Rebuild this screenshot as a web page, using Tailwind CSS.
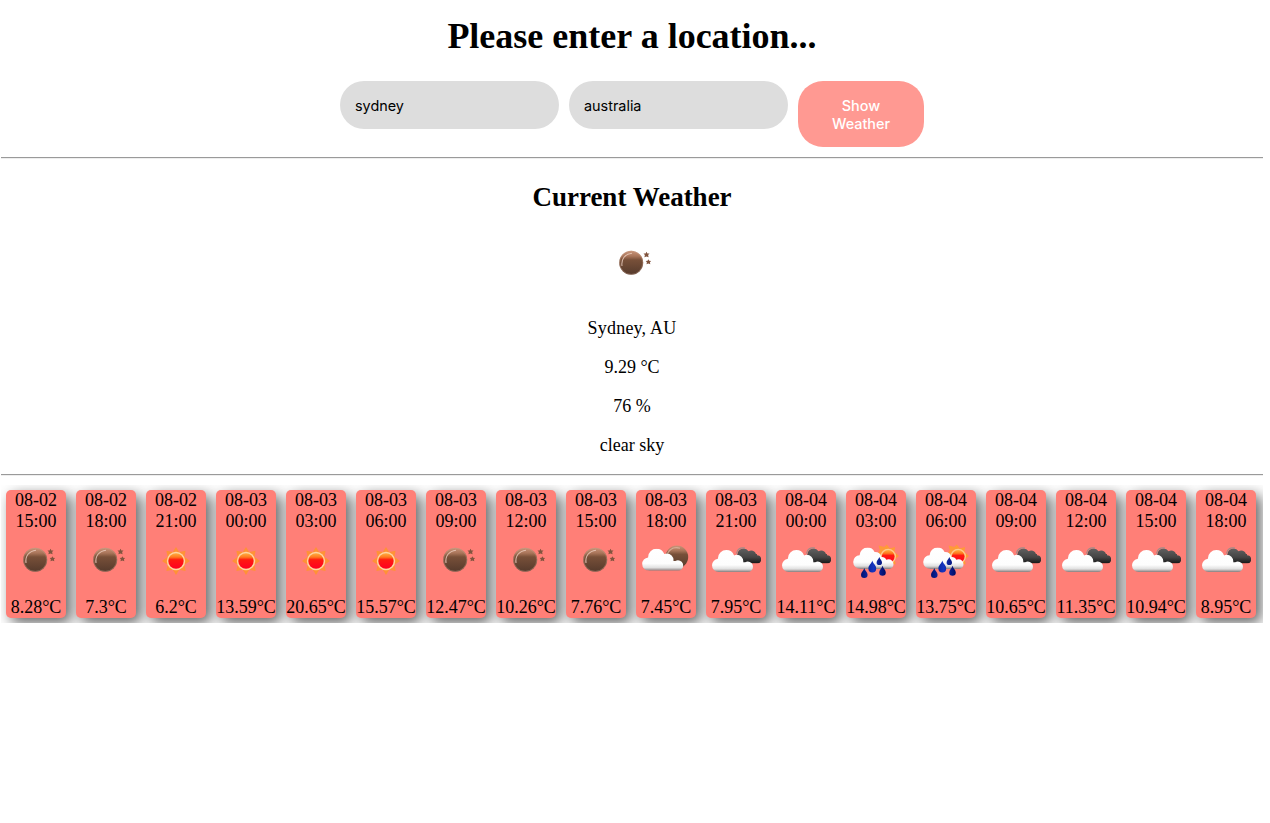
<!DOCTYPE html>
<html lang="en">
<head>
<meta charset="utf-8">
<title>Weather</title>
<script src="https://cdn.jsdelivr.net/npm/@tailwindcss/browser@4"></script>
</head>
<body class="bg-white text-black text-lg leading-[21px] font-['Liberation_Serif',serif]">
<svg class="absolute w-0 h-0" aria-hidden="true">
  <defs>
    <linearGradient id="brown" x1="0" y1="0" x2="0" y2="1"><stop offset="0" stop-color="#c99478"/><stop offset=".22" stop-color="#a9755a"/><stop offset=".38" stop-color="#785039"/><stop offset="1" stop-color="#553a2c"/></linearGradient>
    <linearGradient id="hot" x1="0" y1="0" x2="0" y2="1"><stop offset="0" stop-color="#ffad40"/><stop offset=".25" stop-color="#ff7a20"/><stop offset=".42" stop-color="#ff1a10"/><stop offset="1" stop-color="#ff0022"/></linearGradient>
    <linearGradient id="white" x1="0" y1="0" x2="0" y2="1"><stop offset="0" stop-color="#fff"/><stop offset=".68" stop-color="#fdfdfd"/><stop offset=".86" stop-color="#e0e0e0"/><stop offset=".94" stop-color="#b0a8a8"/><stop offset="1" stop-color="#857b7b"/></linearGradient>
    <linearGradient id="dark" x1="0" y1="0" x2="0" y2="1"><stop offset="0" stop-color="#626262"/><stop offset=".6" stop-color="#444"/><stop offset="1" stop-color="#171717"/></linearGradient>
    <linearGradient id="drop" x1="0" y1="0" x2="1" y2="0"><stop offset="0" stop-color="#001070"/><stop offset=".5" stop-color="#1535c0"/><stop offset="1" stop-color="#000a62"/></linearGradient>
    <clipPath id="puffs"><circle cx="15.5" cy="21.2" r="8.4"/><circle cx="7.8" cy="28" r="6.6"/><circle cx="26" cy="24" r="6.5"/><circle cx="37" cy="29.5" r="5.2"/><rect x="7.800" y="25" width="29.200" height="9.700"/></clipPath>
    <clipPath id="darkPuffs"><circle cx="32.500" cy="18.500" r="6"/><circle cx="40.200" cy="19.500" r="5"/><circle cx="46" cy="23.300" r="4.100"/><path d="M26 18h20v9.400H30z"/></clipPath>
    <clipPath id="rainPuffs"><circle cx="16.500" cy="19.500" r="7.900"/><circle cx="9" cy="26" r="6.800"/><circle cx="24" cy="22.500" r="6.500"/><circle cx="31" cy="25.500" r="4.500"/><circle cx="37.500" cy="28.300" r="5"/><rect x="9" y="24" width="28.500" height="9"/></clipPath>
    <symbol id="cloud" viewBox="0 0 50 50"><rect x="1" y="12.700" width="42" height="22" fill="url(#white)" clip-path="url(#puffs)"/></symbol>
    <symbol id="night" viewBox="0 0 50 50">
      <circle cx="24.2" cy="23.8" r="12" fill="url(#brown)"/>
      <circle cx="24.2" cy="23.8" r="11.6" fill="none" stroke="#c8a08c" stroke-opacity=".5" stroke-width=".8"/>
      <path d="M15 27C14 20 18 15 25 14.200" fill="none" stroke="#ecd0c2" stroke-opacity=".8" stroke-width="1.100"/>
      <path d="M39.500 12.800l.9 1.600 2.100.2-1.400 1.500.5 2.200-2.100-.9-2.100.9.500-2.200-1.400-1.500 2.100-.2zM41.400 20.300l.8 1.400 1.900.2-1.200 1.400.4 2-1.900-.8-1.900.8.4-2-1.200-1.400 1.900-.2z" fill="#80543e"/>
    </symbol>
    <symbol id="clear" viewBox="0 0 50 50">
      <path d="M25 11l3.200 5 6.400-1.200-1.200 6L39 25l-5.600 3.800 1.200 6.100-6.400-1.200L25 39l-3.200-5.300-6.400 1.200 1.200-6.100L11 25l5.600-4.200-1.200-6 6.400 1.200z" fill="#ff9236"/>
      <circle cx="25" cy="25" r="9.200" fill="#ffd5a2"/><circle cx="25" cy="25" r="7.700" fill="url(#hot)"/>
    </symbol>
    <symbol id="scattered" viewBox="0 0 50 50">
      <circle cx="35.800" cy="21" r="11.400" fill="url(#brown)"/><path d="M26.500 17.500c2.500-5 7.500-6.800 12.500-5.300" fill="none" stroke="#e0bda9" stroke-opacity=".7" stroke-width="1.200"/>
      <use href="#cloud" width="50" height="50"/>
    </symbol>
    <symbol id="broken" viewBox="0 0 50 50">
      <rect x="25" y="12" width="26" height="15.400" fill="url(#dark)" clip-path="url(#darkPuffs)"/>
      <path d="M25.500 17.500c.6-4.500 4-6.500 8.500-5.400" fill="none" stroke="#a08c88" stroke-width="1.300"/>
      <use href="#cloud" x="-.2" y="1.300" width="50" height="50"/>
    </symbol>
    <symbol id="rain" viewBox="0 0 50 50">
      <path d="M35.800 8.500l3 3.900 5.200-1.500-.5 5.200 4.500 3.900-4.300 3.200 1 5.200-5.500-1-12-10.500 1.600-3-1.200-4.500 5.600 1.600z" fill="#ff9a38"/>
      <circle cx="37.200" cy="20.500" r="7.800" fill="#ffc98c"/><circle cx="37.200" cy="20.500" r="6.400" fill="url(#hot)"/>
      <rect x="2" y="11.500" width="41" height="21.500" fill="url(#white)" clip-path="url(#rainPuffs)"/>
      <path d="M28.300 21c.6 2.200 2.700 3.200 2.700 5.400a2.700 2.700 0 0 1-5.400 0c0-2.200 2.100-3.200 2.700-5.400zM21.300 24.500c.9 3.400 3.900 4.700 3.900 8a3.900 3.900 0 0 1-7.800 0c0-3.300 3-4.600 3.900-8zM31.500 29.800c.8 2.900 3.300 4 3.300 6.700a3.300 3.300 0 0 1-6.600 0c0-2.700 2.500-3.800 3.300-6.700zM13.300 32c.8 2.900 3.300 4 3.300 6.700a3.300 3.300 0 0 1-6.600 0c0-2.700 2.500-3.800 3.300-6.700z" fill="url(#drop)"/>
    </symbol>
  </defs>
</svg>
<main class="ml-px w-[1262px] text-center">
  <h1 class="pt-4 text-[36px] leading-[41px] font-bold">Please enter a location...</h1>
  <form class="mt-6 flex items-start justify-center gap-2.5 font-['Inter',sans-serif] text-[14.4px] leading-[18px]">
    <input aria-label="City" value="sydney" class="h-12 w-[219px] rounded-[25px] bg-[#ddd] px-[15px] outline-none">
    <input aria-label="Country" value="australia" class="h-12 w-[219px] rounded-[25px] bg-[#ddd] px-[15px] outline-none">
    <button type="button" class="h-[66px] w-[126px] rounded-[25px] bg-[#ff9992] px-5 pt-px font-medium text-white">Show<br>Weather</button>
  </form>
  <hr class="mt-2.5 h-0.5 border-t border-b border-t-[#9a9a9a] border-b-[#eee]">
  <h2 class="mt-[22px] text-[27px] leading-[32px] font-bold">Current Weather</h2>
  <svg class="mx-auto mt-[26px] size-[50px]"><use href="#night"/></svg>
  <div class="mt-[29px] flex flex-col gap-[18px]">
    <p class="tracking-[0.2px]">Sydney, AU</p><p>9.29 °C</p><p>76 %</p><p>clear sky</p>
  </div>
  <hr class="mt-[18px] h-0.5 border-t border-b border-t-[#9a9a9a] border-b-[#eee]">
  <section id="forecast" class="mt-[9px] flex h-[138px] gap-2.5 overflow-hidden p-[5px]"></section>
</main>
<script>
const forecast = [
  ['08-02','15:00','night','8.28'],['08-02','18:00','night','7.3'],['08-02','21:00','clear','6.2'],
  ['08-03','00:00','clear','13.59'],['08-03','03:00','clear','20.65'],['08-03','06:00','clear','15.57'],
  ['08-03','09:00','night','12.47'],['08-03','12:00','night','10.26'],['08-03','15:00','night','7.76'],
  ['08-03','18:00','scattered','7.45'],['08-03','21:00','broken','7.95'],['08-04','00:00','broken','14.11'],
  ['08-04','03:00','rain','14.98'],['08-04','06:00','rain','13.75'],['08-04','09:00','broken','10.65'],
  ['08-04','12:00','broken','11.35'],['08-04','15:00','broken','10.94'],['08-04','18:00','broken','8.95']
];
const card = ([d, t, icon, temp]) => `<article class="flex h-32 w-[60px] shrink-0 flex-col items-center rounded-[5px] bg-[#ff7f77] shadow-[5px_5px_14px_#0000009c]">
  <p>${d}</p><p>${t}</p><svg class="mt-1 size-[50px] shrink-0"><use href="#${icon}"/></svg><p class="mt-[11px] whitespace-nowrap">${temp}°C</p></article>`;
document.getElementById('forecast').innerHTML = forecast.map(card).join('');
</script>
</body>
</html>
